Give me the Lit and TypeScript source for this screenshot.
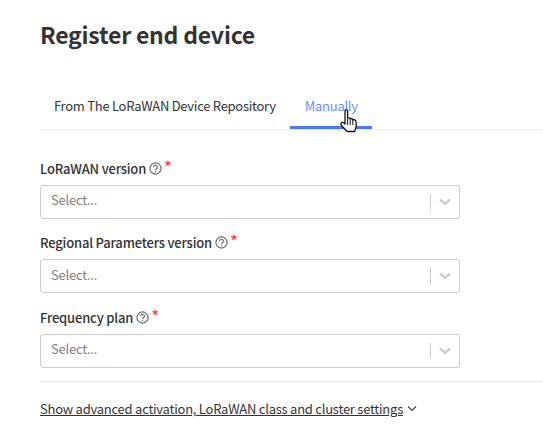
import { css, html, LitElement } from "lit";
import { customElement } from "lit/decorators.js";

const FIELDS = [
  { label: "LoRaWAN version" },
  { label: "Regional Parameters version" },
  { label: "Frequency plan" },
];

@customElement("app-root")
export default class AppRoot extends LitElement {
  static styles = css`
    :host {
      display: block;
      height: 431px;
      overflow: hidden;
      background: #fff;
      color: #333;
      font-family: "Noto Sans CJK SC", "Noto Sans", sans-serif;
      font-size: 13px;
      letter-spacing: -0.24px;
    }

    .page {
      position: relative;
      padding: 19px 0 0 40px;
    }

    h1 {
      margin: 0;
      font-size: 23px;
      letter-spacing: -0.22px;
      line-height: 30px;
      font-weight: 700;
    }

    .tabs {
      display: flex;
      margin-top: 43px;
      height: 37px;
      border-bottom: 1px solid #eee;
    }

    .tab {
      padding: 0 14px;
      line-height: 28px;
      white-space: nowrap;
      letter-spacing: -0.27px;
    }

    .tab.active {
      padding: 0 14px 0 15px;
      color: #6b8cff;
      border-bottom: 3px solid #4a77ff;
      height: 34px;
      margin-bottom: -1px;
    }

    .fields {
      display: flex;
      flex-direction: column;
      gap: 14px;
      margin-top: 28px;
      width: 420px;
    }

    .label {
      display: flex;
      align-items: center;
      height: 20px;
      margin-bottom: 6.5px;
      font-weight: 500;
      letter-spacing: -0.18px;
    }

    .label svg {
      margin: 0 2px 0 3px;
    }

    .req {
      color: #f33;
      font-size: 17px;
      font-weight: 400;
      line-height: 14px;
      margin: -3px 0 0 0;
    }

    .select {
      display: flex;
      align-items: center;
      box-sizing: border-box;
      height: 34px;
      border: 1px solid #ccc;
      border-radius: 3px;
      padding-left: 10px;
      color: #808080;
    }

    .value {
      flex: 1;
      padding-bottom: 4px;
    }

    .sep {
      width: 1px;
      height: 16px;
      background: #ccc;
    }

    .caret {
      width: 28px;
      display: flex;
      justify-content: center;
    }

    hr {
      border: 0;
      border-top: 1px solid #eee;
      margin: 13px 0 0;
    }

    .more {
      display: flex;
      align-items: center;
      gap: 4px;
      margin-top: 17px;
      height: 20px;
    }

    .more span {
      text-decoration: underline;
    }

    .cursor {
      position: absolute;
      left: 340px;
      top: 109px;
    }
  `;

  render() {
    return html`
      <div class="page">
        <h1>Register end device</h1>
        <div class="tabs">
          <div class="tab">From The LoRaWAN Device Repository</div>
          <div class="tab active">Manually</div>
        </div>
        <div class="fields">
          ${FIELDS.map(
            (f) => html`
              <div>
                <div class="label">
                  ${f.label}
                  <svg width="13" height="13" viewBox="0 0 13 13" fill="none" stroke="#666" stroke-width="1.1">
                    <circle cx="6.5" cy="6.5" r="5.6" />
                    <path d="M4.6 5.2a1.9 1.9 0 1 1 3 1.5c-.8.6-1.1.9-1.1 1.6" />
                    <path d="M6.5 9.1v1.2" />
                  </svg>
                  <span class="req">*</span>
                </div>
                <div class="select">
                  <span class="value">Select...</span>
                  <span class="sep"></span>
                  <span class="caret">
                    <svg width="14" height="10" viewBox="0 0 14 10" fill="none" stroke="#ccc" stroke-width="2.4">
                      <path d="M2 2.5l5 4.5 5-4.5" />
                    </svg>
                  </span>
                </div>
              </div>
            `
          )}
        </div>
        <hr />
        <div class="more">
          <span>Show advanced activation, LoRaWAN class and cluster settings</span>
          <svg width="10" height="7" viewBox="0 0 10 7" fill="none" stroke="#444" stroke-width="1.2">
            <path d="M1 1.5l4 4 4-4" />
          </svg>
        </div>
        <svg class="cursor" width="18" height="25" viewBox="0 0 18 25">
          <path
            d="M5 2.2C5 1.2 5.6.7 6.3.7S7.6 1.2 7.6 2.2V9c1.2-.4 2.2-.2 2.6.8 1-.5 2.2-.2 2.600 1 1.200-.5 3 0 3.200 1.700l.3 4c0 2-.8 3.500-1.800 6H7l-5.500-6c-1-1.200-.7-2.500.2-3 .9-.5 2.100 0 3.300 1.500z"
            fill="#fff"
            stroke="#111"
            stroke-width="1.3"
            stroke-linejoin="round"
          />
          <path d="M7.6 10v6M10.2 10v6M12.8 11v5" stroke="#111" stroke-width="1" fill="none" />
        </svg>
      </div>
    `;
  }
}
